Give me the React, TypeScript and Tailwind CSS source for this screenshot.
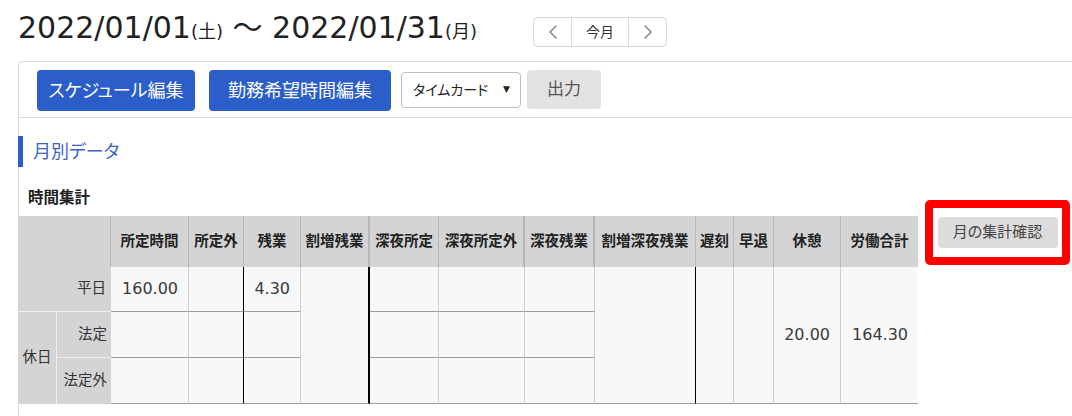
import React from "react";

const FONT = "font-['DejaVu_Sans','Noto_Sans_CJK_JP',sans-serif]";

const Chevron = ({ dir }: { dir: "l" | "r" }) => (
  <svg width="10" height="14" viewBox="0 0 10 14" fill="none">
    <path
      d={dir === "l" ? "M8 1 L2 7 L8 13" : "M2 1 L8 7 L2 13"}
      stroke="#8a8a8a"
      strokeWidth="1.6"
      strokeLinecap="round"
      strokeLinejoin="round"
    />
  </svg>
);

const HEAD =
  "bg-[#d4d4d4] flex items-center justify-center text-[14.5px] font-bold text-[#222] border-r border-r-[#b8b8b8] row-start-1";
const DATA =
  "bg-[#f8f8f8] flex items-center justify-end pr-[10px] text-[16px] text-[#3a3a3a] border-r border-b border-r-[#cfcfcf] border-b-[#9e9e9e]";
const LABEL = "bg-[#d4d4d4] flex items-center text-[14.5px] text-[#333]";

export default function App() {
  return (
    <div
      className={`w-[1072px] h-[416px] overflow-hidden bg-white text-[#222] ${FONT} [font-feature-settings:'palt']`}
    >
      {/* Title row */}
      <div className="h-[61px] flex items-start pl-[18px]">
        <div className="w-[515px] pt-[8px] leading-[40px] text-[30px] text-[#222] whitespace-nowrap">
          2022/01/01<span className="text-[18px]">(土)</span> ～ 2022/01/31
          <span className="text-[18px]">(月)</span>
        </div>
        <div className="mt-[17px] flex h-[30px] border border-[#d8d8d8] rounded-[4px] bg-white">
          <div className="w-[38px] flex items-center justify-center border-r border-[#d8d8d8]">
            <Chevron dir="l" />
          </div>
          <div className="w-[57px] flex items-center justify-center border-r border-[#d8d8d8] text-[14px] text-[#333]">
            今月
          </div>
          <div className="w-[37px] flex items-center justify-center">
            <Chevron dir="r" />
          </div>
        </div>
      </div>

      {/* Card */}
      <div className="ml-[18px] w-[1070px] h-[355px] border-l border-t border-[#dcdcdc] rounded-tl-[5px]">
        {/* Toolbar */}
        <div className="h-[56px] border-b border-[#dcdcdc] flex items-start pt-[8px] pl-[18px]">
          <button className="w-[158px] h-[41px] bg-[#2b5ec8] rounded-[4px] text-white text-[18px] flex items-center justify-center">
            スケジュール編集
          </button>
          <button className="ml-[14px] w-[182px] h-[41px] bg-[#2b5ec8] rounded-[4px] text-white text-[18px] flex items-center justify-center">
            勤務希望時間編集
          </button>
          <div className="ml-[10px] mt-[2px] w-[120px] h-[36px] border border-[#bdbdbd] rounded-[4px] bg-white flex items-center justify-between pl-[11px] pr-[10px]">
            <span className="text-[14px] text-[#222]">タイムカード</span>
            <span className="text-[9px] text-[#222]">▼</span>
          </div>
          <button className="ml-[6px] w-[74px] h-[39px] bg-[#e2e2e2] rounded-[4px] text-[17px] text-[#555] flex items-center justify-center">
            出力
          </button>
        </div>

        {/* Section heading */}
        <div className="mt-[18px] -ml-[1px] flex items-center h-[31px]">
          <div className="w-[5px] h-[31px] bg-[#2b5ec8]" />
          <span className="ml-[10px] text-[18px] leading-[31px] text-[#3b62c4]">月別データ</span>
        </div>

        {/* Main row */}
        <div className="mt-[20px] flex items-start">
          <div>
            <div className="pl-[9px] h-[22px] leading-[22px] text-[15.5px] font-bold text-[#222]">
              時間集計
            </div>
            <div className="mt-[7px] -ml-[1px] grid grid-cols-[39px_54px_78px_55px_57px_69px_69px_86px_70px_101px_38px_40px_67px_77px] grid-rows-[51px_45px_46px_46px]">
              {/* header */}
              <div className={`${HEAD} col-start-1 col-span-2`} />
              <div className={`${HEAD} col-start-3`}>所定時間</div>
              <div className={`${HEAD} col-start-4`}>所定外</div>
              <div className={`${HEAD} col-start-5`}>残業</div>
              <div className={`${HEAD} col-start-6 border-r-2 border-r-[#a8a8a8]`}>割増残業</div>
              <div className={`${HEAD} col-start-7`}>深夜所定</div>
              <div className={`${HEAD} col-start-8 border-r-2 border-r-[#b0b0b0]`}>深夜所定外</div>
              <div className={`${HEAD} col-start-9 border-r-2 border-r-[#b0b0b0]`}>深夜残業</div>
              <div className={`${HEAD} col-start-10`}>割増深夜残業</div>
              <div className={`${HEAD} col-start-11`}>遅刻</div>
              <div className={`${HEAD} col-start-12`}>早退</div>
              <div className={`${HEAD} col-start-13`}>休憩</div>
              <div className={`${HEAD} col-start-14 border-r-0`}>労働合計</div>

              {/* row 平日 */}
              <div className={`${LABEL} col-start-1 col-span-2 row-start-2 justify-end pr-[5px] border-b border-[#f0f0f0]`}>
                平日
              </div>
              <div className={`${DATA} col-start-3 row-start-2`}>160.00</div>
              <div className={`${DATA} col-start-4 row-start-2 border-r-black`} />
              <div className={`${DATA} col-start-5 row-start-2`}>4.30</div>
              <div className={`${DATA} col-start-6 row-start-2 row-span-3 border-r-2 border-r-black`} />
              <div className={`${DATA} col-start-7 row-start-2`} />
              <div className={`${DATA} col-start-8 row-start-2`} />
              <div className={`${DATA} col-start-9 row-start-2`} />
              <div className={`${DATA} col-start-10 row-start-2 row-span-3 border-r-black`} />
              <div className={`${DATA} col-start-11 row-start-2 row-span-3`} />
              <div className={`${DATA} col-start-12 row-start-2 row-span-3`} />
              <div className={`${DATA} col-start-13 row-start-2 row-span-3`}>20.00</div>
              <div className={`${DATA} col-start-14 row-start-2 row-span-3 border-r-0`}>164.30</div>

              {/* 休日 */}
              <div className={`${LABEL} col-start-1 row-start-3 row-span-2 justify-center border-r border-[#f0f0f0]`}>
                休日
              </div>
              <div className={`${LABEL} col-start-2 row-start-3 justify-end pr-[4px] border-b border-[#f0f0f0]`}>
                法定
              </div>
              <div className={`${DATA} col-start-3 row-start-3`} />
              <div className={`${DATA} col-start-4 row-start-3 border-r-black`} />
              <div className={`${DATA} col-start-5 row-start-3`} />
              <div className={`${DATA} col-start-7 row-start-3`} />
              <div className={`${DATA} col-start-8 row-start-3`} />
              <div className={`${DATA} col-start-9 row-start-3`} />

              <div className={`${LABEL} col-start-2 row-start-4 justify-end pr-[4px]`}>法定外</div>
              <div className={`${DATA} col-start-3 row-start-4`} />
              <div className={`${DATA} col-start-4 row-start-4 border-r-black`} />
              <div className={`${DATA} col-start-5 row-start-4`} />
              <div className={`${DATA} col-start-7 row-start-4`} />
              <div className={`${DATA} col-start-8 row-start-4`} />
              <div className={`${DATA} col-start-9 row-start-4`} />
            </div>
          </div>

          <div className="ml-[7px] mt-[13px] w-[145px] h-[65px] border-[8px] border-[#ff0000] rounded-[5px] flex items-center justify-center">
            <button className="w-[120px] h-[31px] bg-[#dcdcdc] rounded-[4px] text-[15px] text-[#444] flex items-center justify-center">
              月の集計確認
            </button>
          </div>
        </div>
      </div>
    </div>
  );
}
